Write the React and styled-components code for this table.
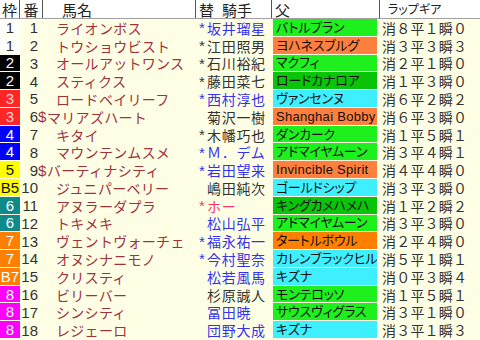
import React from 'react';
import styled, {createGlobalStyle} from "styled-components";

const GlobalStyle = createGlobalStyle`
    html, body {
        margin: 0;
        padding: 0;
        background: #ffffe6;
    }
`;

const jp = `"Noto Sans CJK JP", sans-serif`;
const narrow = `"Liberation Sans Narrow", "Liberation Sans", "Noto Sans CJK JP", sans-serif`;

const frameColors = {
    1: {bg: '#ffffff', fg: '#333333'},
    2: {bg: '#000000', fg: '#ffffff'},
    3: {bg: '#ff2626', fg: '#ffd0d0'},
    4: {bg: '#0000ff', fg: '#ffffff'},
    5: {bg: '#ffff00', fg: '#111111'},
    6: {bg: '#0f8a8a', fg: '#ffffff'},
    7: {bg: '#ff8000', fg: '#ffffff'},
    8: {bg: '#ff00ff', fg: '#ffffff'},
};

const sireColors = {
    green: '#1ef01e',
    dark: '#0ac40a',
    coral: '#ff7f3f',
    orange: '#ff8000',
    cyan: '#3ef0ff',
};

const jockeyColors = {
    blue: '#3333ee',
    black: '#333333',
    red: '#ff3366',
};

const horses = [
    {frame: 1, label: '1', no: 1, name: 'ライオンボス', jockey: '坂井瑠星', mark: true, jc: 'blue', sire: 'バトルプラン', sc: 'green', lap: '消８平１瞬０'},
    {frame: 1, label: '1', no: 2, name: 'トウショウビスト', jockey: '江田照男', mark: true, jc: 'black', sire: 'ヨハネスブルグ', sc: 'coral', lap: '消３平３瞬３'},
    {frame: 2, label: '2', no: 3, name: 'オールアットワンス', jockey: '石川裕紀', mark: true, jc: 'black', sire: 'マクフィ', sc: 'green', lap: '消２平１瞬０'},
    {frame: 2, label: '2', no: 4, name: 'スティクス', jockey: '藤田菜七', mark: true, jc: 'black', sire: 'ロードカナロア', sc: 'dark', lap: '消１平３瞬０'},
    {frame: 3, label: '3', no: 5, name: 'ロードベイリーフ', jockey: '西村淳也', mark: true, jc: 'blue', sire: 'ヴァンセンヌ', sc: 'cyan', lap: '消６平２瞬２'},
    {frame: 3, label: '3', no: 6, name: 'マリアズハート', dollar: true, jockey: '菊沢一樹', jc: 'black', sire: 'Shanghai Bobby', sc: 'coral', lap: '消６平３瞬０'},
    {frame: 4, label: '4', no: 7, name: 'キタイ', jockey: '木幡巧也', mark: true, jc: 'black', sire: 'ダンカーク', sc: 'green', lap: '消１平５瞬１'},
    {frame: 4, label: '4', no: 8, name: 'マウンテンムスメ', jockey: 'Ｍ．デム', mark: true, jc: 'blue', sire: 'アドマイヤムーン', sc: 'green', lap: '消３平４瞬１'},
    {frame: 5, label: '5', no: 9, name: 'バーティナシティ', dollar: true, jockey: '岩田望来', mark: true, jc: 'blue', sire: 'Invincible Spirit', sc: 'coral', lap: '消４平４瞬０'},
    {frame: 5, label: 'B5', no: 10, name: 'ジュニパーベリー', jockey: '嶋田純次', jc: 'black', sire: 'ゴールドシップ', sc: 'cyan', lap: '消３平３瞬０'},
    {frame: 6, label: '6', no: 11, name: 'アヌラーダプラ', jockey: 'ホー', mark: true, jc: 'red', sire: 'キングカメハメハ', sc: 'dark', lap: '消１平２瞬２'},
    {frame: 6, label: '6', no: 12, name: 'トキメキ', jockey: '松山弘平', jc: 'blue', sire: 'アドマイヤムーン', sc: 'green', lap: '消３平３瞬０'},
    {frame: 7, label: '7', no: 13, name: 'ヴェントヴォーチェ', jockey: '福永祐一', mark: true, jc: 'blue', sire: 'タートルボウル', sc: 'orange', lap: '消２平４瞬０'},
    {frame: 7, label: '7', no: 14, name: 'オヌシナニモノ', jockey: '今村聖奈', mark: true, jc: 'blue', sire: 'カレンブラックヒル', sc: 'cyan', lap: '消５平１瞬１'},
    {frame: 7, label: 'B7', no: 15, name: 'クリスティ', jockey: '松若風馬', jc: 'blue', sire: 'キズナ', sc: 'cyan', lap: '消０平３瞬４'},
    {frame: 8, label: '8', no: 16, name: 'ビリーバー', jockey: '杉原誠人', jc: 'black', sire: 'モンテロッソ', sc: 'green', lap: '消１平５瞬１'},
    {frame: 8, label: '8', no: 17, name: 'シンシティ', jockey: '冨田暁', jc: 'blue', sire: 'サウスヴィグラス', sc: 'green', lap: '消３平１瞬０'},
    {frame: 8, label: '8', no: 18, name: 'レジェーロ', jockey: '団野大成', jc: 'blue', sire: 'キズナ', sc: 'cyan', lap: '消３平１瞬３'},
];

const Root = styled.div`
    width: 480px;
    height: 340px;
    overflow: hidden;
    background: #ffffe6;
    display: flex;
    flex-direction: column;
`;

const Header = styled.div`
    display: grid;
    grid-template-columns: 20px 23px 153px 76px 108px 100px;
    height: 19px;
    flex: none;
    background: #ffffff;
    border-bottom: 1px solid #a0a0a0;
    box-sizing: border-box;
    font-family: ${jp};
    color: #222222;
`;

const HeadCell = styled.div`
    display: flex;
    align-items: center;
    justify-content: ${p => p.$center ? 'center' : 'flex-start'};
    padding-left: ${p => p.$pad || 0}px;
    border-right: ${p => p.$last ? 'none' : '1px solid #555555'};
    font-size: ${p => p.$small ? 12 : 15}px;
    font-feature-settings: ${p => p.$small ? '"palt"' : 'normal'};
    line-height: 1;
    white-space: nowrap;
`;

const Gap = styled.span`
    display: inline-block;
    width: ${p => p.$w}px;
`;

const Body = styled.div`
    display: grid;
    grid-template-rows: repeat(18, 1fr);
    height: 320px;
    flex: none;
`;

const Row = styled.div`
    display: grid;
    grid-template-columns: 20px 18px 158px 77px 106px 101px;
    min-height: 0;
`;

const Frame = styled.div`
    background: ${p => frameColors[p.$frame].bg};
    color: ${p => frameColors[p.$frame].fg};
    margin-bottom: 1px;
    display: flex;
    align-items: center;
    justify-content: center;
    font-family: ${narrow};
    font-size: 15px;
    line-height: 1;
`;

const Num = styled.div`
    display: flex;
    align-items: center;
    justify-content: flex-end;
    color: #333333;
    font-family: ${narrow};
    font-size: 15px;
    line-height: 1;
`;

const Name = styled.div`
    display: flex;
    align-items: center;
    color: #a0323c;
    font-family: ${jp};
    font-size: 14px;
    letter-spacing: 0.3px;
    white-space: nowrap;
    overflow: hidden;
    line-height: 1;
`;

const Prefix = styled.span`
    flex: none;
    width: ${p => p.$dollar ? 9 : 18}px;
    font-family: "Liberation Sans", sans-serif;
    font-size: 15px;
    letter-spacing: 0;
`;

const Jockey = styled.div`
    display: flex;
    align-items: center;
    padding-left: 3px;
    color: ${p => jockeyColors[p.$tone]};
    font-family: ${jp};
    font-size: 14px;
    letter-spacing: 0.7px;
    white-space: nowrap;
    overflow: hidden;
    line-height: 1;
`;

const Mark = styled.span`
    flex: none;
    width: 8px;
    font-family: "Liberation Sans", sans-serif;
    font-size: 15px;
    letter-spacing: 0;
`;

const Sire = styled.div`
    background: ${p => sireColors[p.$tone]};
    margin: 0 2px 1px 0;
    display: flex;
    align-items: center;
    padding-left: 3px;
    color: #111111;
    font-family: "Liberation Sans", "Noto Sans CJK JP", sans-serif;
    font-size: 13px;
    font-feature-settings: "palt";
    letter-spacing: ${p => p.$latin ? 0.3 : -0.2}px;
    white-space: nowrap;
    overflow: hidden;
    line-height: 1;
`;

const Lap = styled.div`
    display: flex;
    align-items: center;
    padding-left: 3px;
    color: #333333;
    font-family: ${jp};
    font-size: 14px;
    letter-spacing: 0.2px;
    white-space: nowrap;
    overflow: hidden;
    line-height: 1;
`;

function HorseRow({h}) {
    return (
        <Row>
            <Frame $frame={h.frame}>{h.label}</Frame>
            <Num>{h.no}</Num>
            <Name>
                <Prefix $dollar={h.dollar}>{h.dollar ? '$' : ''}</Prefix>
                {h.name}
            </Name>
            <Jockey $tone={h.jc}>
                <Mark>{h.mark ? '*' : ''}</Mark>
                {h.jockey}
            </Jockey>
            <Sire $tone={h.sc} $latin={/^[A-Za-z]/.test(h.sire)}>{h.sire}</Sire>
            <Lap>{h.lap}</Lap>
        </Row>
    );
}

export default function App() {
    return (
        <Root>
            <GlobalStyle/>
            <Header>
                <HeadCell $center>枠</HeadCell>
                <HeadCell $center>番</HeadCell>
                <HeadCell $pad={19}>馬名</HeadCell>
                <HeadCell $pad={3}>替<Gap $w={8}/>騎手</HeadCell>
                <HeadCell $pad={3}>父</HeadCell>
                <HeadCell $pad={8} $small $last>ラップギア</HeadCell>
            </Header>
            <Body>
                {horses.map(h => <HorseRow key={h.no} h={h}/>)}
            </Body>
        </Root>
    );
};
